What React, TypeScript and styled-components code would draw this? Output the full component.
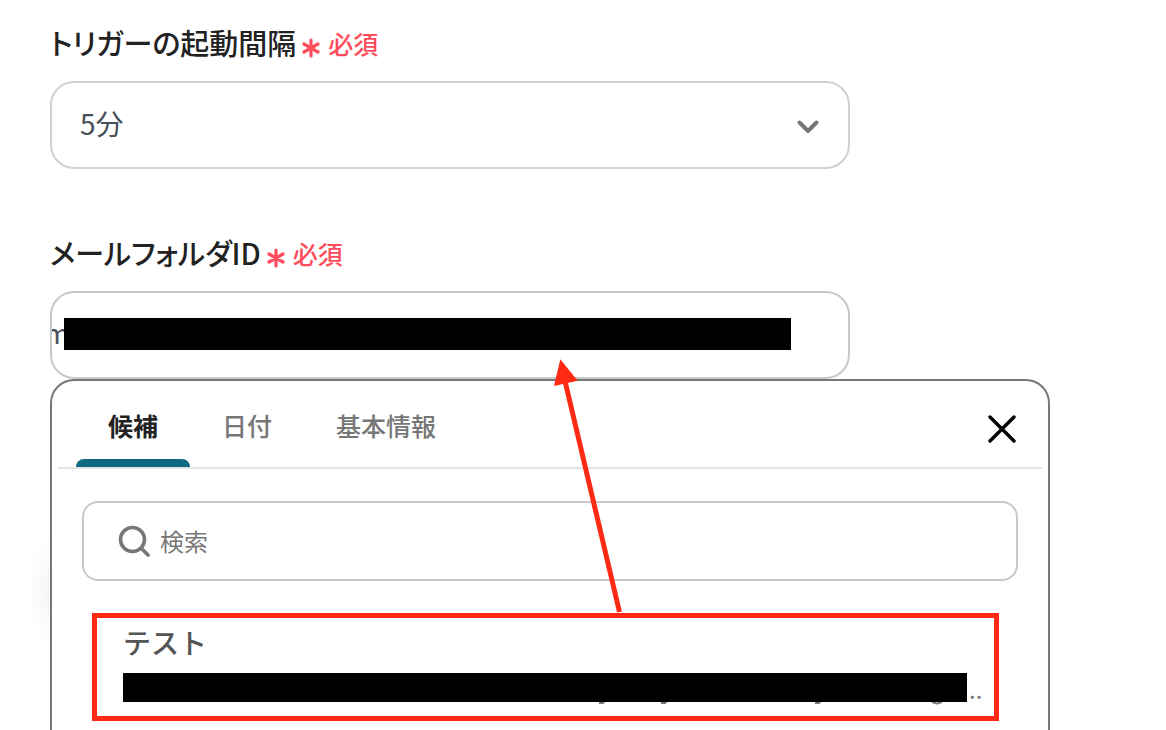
import React, { useState } from "react";
import styled, { createGlobalStyle } from "styled-components";

const GlobalStyle = createGlobalStyle`
  *, *::before, *::after { box-sizing: border-box; }
  body {
    margin: 0;
    background: #fff;
    color: #222;
    font-family: "Noto Sans CJK JP", "Noto Sans", sans-serif;
  }
  button, input, select { font-family: inherit; margin: 0; }
`;

const Page = styled.main`
  display: flex;
  flex-direction: column;
  gap: 62px;
  height: 100vh;
  overflow: hidden;
  padding: 21px 50px 0;
`;

const Field = styled.div<{ $grow?: boolean }>`
  display: flex;
  flex-direction: column;
  flex: ${(p) => (p.$grow ? "1" : "none")};
  gap: 18px;
`;

const LabelRow = styled.div`
  display: flex;
  align-items: center;
  gap: 6px;
  height: 42px;
`;

const Label = styled.label`
  font-size: 29px;
  line-height: 42px;
  font-weight: 500;
  font-feature-settings: "palt";
`;

const Required = styled.span`
  display: flex;
  align-items: center;
  gap: 8px;
  padding-top: 2px;
  color: #ff4d5e;
  font-size: 25px;
  line-height: 36px;
  font-weight: 500;

  svg {
    margin-top: 10px;
  }
`;

const Control = styled.div<{ $tone: string }>`
  position: relative;
  display: flex;
  align-items: center;
  width: 100%;
  max-width: 800px;
  height: 88px;
  border: 2px solid ${(p) => p.$tone};
  border-radius: 24px;
  background: #fff;
  overflow: hidden;
`;

const Select = styled.select`
  appearance: none;
  width: 100%;
  height: 100%;
  padding: 0 28px 4px;
  border: 0;
  outline: 0;
  background: transparent;
  color: #47505a;
  font-size: 28px;
`;

const Chevron = styled.svg`
  position: absolute;
  right: 29px;
  top: 37px;
  pointer-events: none;
`;

const FolderInput = styled.input`
  width: 100%;
  height: 100%;
  padding: 0 0 6px;
  border: 0;
  outline: 0;
  background: transparent;
  color: #47505a;
  font-size: 28px;
  text-indent: -8px;
`;

const FieldMask = styled.span`
  position: absolute;
  left: 12px;
  right: 57px;
  top: 25px;
  height: 32px;
  background: #000;
`;

const Combo = styled.div`
  position: relative;
  z-index: 0;
  display: flex;
  flex-direction: column;
  flex: 1;
`;

const Glow = styled.div`
  position: absolute;
  z-index: -1;
  left: -24px;
  top: 240px;
  width: 72px;
  height: 120px;
  background: radial-gradient(closest-side, #eff1f0, #ffffff);
`;

const Panel = styled.section`
  display: flex;
  flex-direction: column;
  flex: 1;
  width: 100%;
  max-width: 1000px;
  border: 2px solid #777;
  border-bottom: 0;
  border-radius: 24px 24px 0 0;
  background: #fff;
`;

const PanelHead = styled.header`
  display: flex;
  align-items: stretch;
  justify-content: space-between;
  height: 88px;
  margin: 0 6px;
  padding: 0 18px;
  border-bottom: 2px solid #e3e3e3;
`;

const Tabs = styled.div`
  display: flex;
`;

const Tab = styled.button<{ $active: boolean }>`
  display: flex;
  flex-direction: column;
  justify-content: space-between;
  padding: 26px 0 0;
  border: 0;
  background: transparent;
  color: ${(p) => (p.$active ? "#222" : "#777")};
  font-size: 25px;
  line-height: 36px;
  font-weight: ${(p) => (p.$active ? 700 : 500)};
  cursor: pointer;

  span {
    padding: 0 32px;
  }

  &::after {
    content: "";
    width: 100%;
    height: 8px;
    border-radius: 8px 8px 0 0;
    background: ${(p) => (p.$active ? "#0d6a82" : "transparent")};
  }
`;

const Close = styled.button`
  display: flex;
  align-items: center;
  padding: 10px 8px 0;
  border: 0;
  background: transparent;
  cursor: pointer;
`;

const SearchBox = styled.label`
  display: flex;
  align-items: center;
  gap: 10px;
  height: 80px;
  margin: 32px 30px;
  padding: 0 34px;
  border: 2px solid #c8c8c8;
  border-radius: 16px;
`;

const SearchInput = styled.input`
  flex: 1;
  min-width: 0;
  height: 100%;
  padding: 0 0 2px;
  border: 0;
  outline: 0;
  background: transparent;
  color: #222;
  font-size: 24px;

  &::placeholder {
    color: #777;
    opacity: 1;
  }
`;

const Result = styled.button`
  display: flex;
  flex-direction: column;
  gap: 12px;
  height: 108px;
  margin: 0 49px 0 40px;
  padding: 5px 14px 0 26px;
  border: 5px solid #ff2a13;
  background: #fff;
  text-align: left;
  cursor: pointer;
`;

const ResultTitle = styled.span`
  color: #555;
  font-size: 28px;
  line-height: 38px;
  font-weight: 500;
`;

const ResultValue = styled.span`
  display: flex;
  align-items: flex-end;
  gap: 2px;
  width: 100%;
  height: 32px;
  color: #777;
  font-size: 24px;
  line-height: 32px;
`;

const ValueMask = styled.span`
  display: flex;
  flex: 1;
  flex-direction: column;
  height: 32px;

  &::before {
    content: "";
    height: 29px;
    background: #000;
  }
`;

const Arrow = styled.svg`
  position: absolute;
  left: 500px;
  top: 64px;
  pointer-events: none;
`;

function RequiredMark() {
  return (
    <Required>
      <svg width="18" height="20" viewBox="0 0 18 20" fill="none" stroke="currentColor" strokeWidth="3.200" strokeLinecap="round" aria-hidden="true">
        <path d="M9 2v16M2 6l14 8M16 6L2 14" />
      </svg>
      必須
    </Required>
  );
}

const TABS = ["候補", "日付", "基本情報"];

export default function App() {
  const [tab, setTab] = useState(TABS[0]);
  const [folder, setFolder] = useState("m");

  return (
    <>
      <GlobalStyle />
      <Page>
        <Field>
          <LabelRow>
            <Label htmlFor="interval">トリガーの起動間隔</Label>
            <RequiredMark />
          </LabelRow>
          <Control $tone="#cdd1d8">
            <Select id="interval" defaultValue="5">
              <option value="5">5分</option>
            </Select>
            <Chevron width="22" height="14" viewBox="0 0 22 14" fill="none" stroke="#777" strokeWidth="4" strokeLinecap="round" strokeLinejoin="round" aria-hidden="true">
              <path d="M2.5 2.5L11 11l8.500-8.500" />
            </Chevron>
          </Control>
        </Field>

        <Field $grow>
          <LabelRow>
            <Label htmlFor="folder">メールフォルダID</Label>
            <RequiredMark />
          </LabelRow>
          <Combo>
            <Glow />
            <Control $tone="#c8c8c8">
              <FolderInput id="folder" value={folder} onChange={(e) => setFolder(e.target.value)} />
              <FieldMask />
            </Control>
            <Panel>
              <PanelHead>
                <Tabs role="tablist">
                  {TABS.map((name) => (
                    <Tab key={name} type="button" role="tab" aria-selected={tab === name} $active={tab === name} onClick={() => setTab(name)}>
                      <span>{name}</span>
                    </Tab>
                  ))}
                </Tabs>
                <Close type="button" aria-label="閉じる">
                  <svg width="28" height="28" viewBox="0 0 28 28" fill="none" stroke="#000" strokeWidth="3.400" strokeLinecap="round" aria-hidden="true">
                    <path d="M2 2l24 24M26 2L2 26" />
                  </svg>
                </Close>
              </PanelHead>
              <SearchBox>
                <svg width="32" height="32" viewBox="0 0 32 32" fill="none" stroke="#777" strokeWidth="3.600" strokeLinecap="round" aria-hidden="true">
                  <circle cx="14.500" cy="14.500" r="12" />
                  <path d="M23.200 23.200l6.800 6.800" />
                </svg>
                <SearchInput type="text" placeholder="検索" aria-label="検索" />
              </SearchBox>
              <Result type="button">
                <ResultTitle>テスト</ResultTitle>
                <ResultValue>
                  <ValueMask>
                    <svg width="844" height="3" viewBox="0 0 844 3" fill="none" stroke="#777" strokeWidth="2" aria-hidden="true">
                      <path d="M476 1h4l2-2M538 1h4l2-2M692 1h4l2-2M809 0q5 3 10 0" />
                    </svg>
                  </ValueMask>
                  ..
                </ResultValue>
              </Result>
            </Panel>
            <Arrow width="76" height="264" viewBox="0 0 76 264" aria-hidden="true">
              <path d="M15 26L69.500 257" stroke="#ff2a13" strokeWidth="5" />
              <path d="M10.300 4.300L4 31l23.700-5.300z" fill="#ff2a13" />
            </Arrow>
          </Combo>
        </Field>
      </Page>
    </>
  );
}
